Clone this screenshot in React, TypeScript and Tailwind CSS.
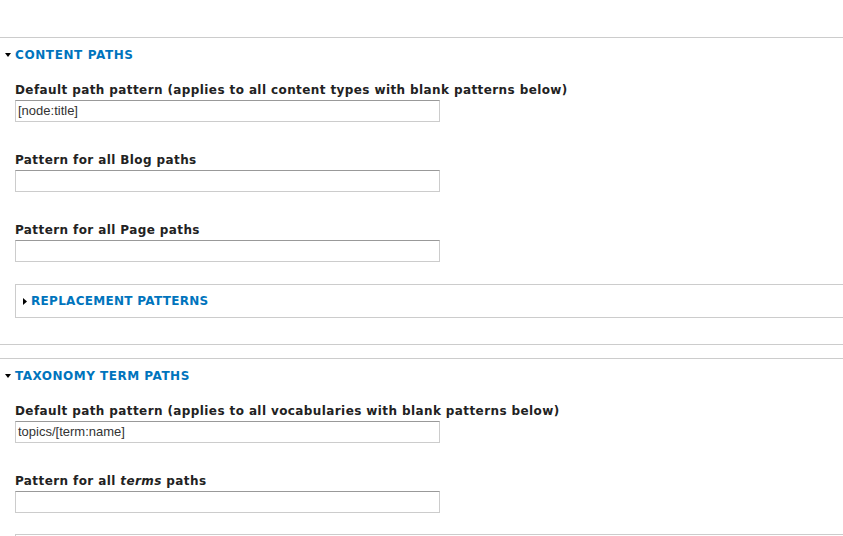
import React from "react";

const font = { fontFamily: '"DejaVu Sans", Verdana, sans-serif' };

function DownTri() {
  return (
    <svg width="6" height="4" viewBox="0 0 6 4" className="mr-[4px] shrink-0">
      <polygon points="0,0 6,0 3,4" fill="#000" />
    </svg>
  );
}
function RightTri() {
  return (
    <svg width="4" height="7" viewBox="0 0 4 7" className="mr-[4px] shrink-0">
      <polygon points="0,0 4,3.5 0,7" fill="#000" />
    </svg>
  );
}

function Field({ label, value }: { label: React.ReactNode; value?: string }) {
  return (
    <div className="pl-[15px]">
      <div className="text-[12px] font-bold text-[#222] leading-[16px] h-[16px] mb-[2px] whitespace-nowrap tracking-[0.4px]">{label}</div>
      <div className="w-[425px] h-[22px] border border-[#ccc] border-t-[#999] bg-white flex items-center pl-[2px]">
        <span className="text-[13px] text-[#333]" style={{ fontFamily: '"Liberation Sans", Arial, sans-serif' }}>
          {value}
        </span>
      </div>
    </div>
  );
}

export default function App() {
  return (
    <div className="w-[843px] h-[536px] bg-white overflow-hidden" style={font}>
      <div className="h-[37px]" />
      <div className="border-y border-[#ccc] pb-[26px]">
        <div className="flex items-center pl-[5px] h-[32px] pt-[2px]">
          <DownTri />
          <span className="text-[12px] font-bold text-[#0074bd] uppercase leading-none tracking-[0.6px]">Content paths</span>
        </div>
        <div className="flex flex-col gap-[30px] mt-[12px]">
          <Field label="Default path pattern (applies to all content types with blank patterns below)" value="[node:title]" />
          <Field label="Pattern for all Blog paths" />
          <Field label="Pattern for all Page paths" />
        </div>
        <div className="ml-[15px] mt-[22px] h-[34px] border border-r-0 border-[#ccc] flex items-center pl-[7px]">
          <RightTri />
          <span className="text-[12px] font-bold text-[#0074bd] uppercase leading-none tracking-[0.3px]">Replacement patterns</span>
        </div>
      </div>
      <div className="h-[13px]" />
      <div className="border-t border-[#ccc]">
        <div className="flex items-center pl-[5px] h-[32px] pt-[2px]">
          <DownTri />
          <span className="text-[12px] font-bold text-[#0074bd] uppercase leading-none tracking-[0.5px]">Taxonomy term paths</span>
        </div>
        <div className="flex flex-col gap-[30px] mt-[12px]">
          <Field label="Default path pattern (applies to all vocabularies with blank patterns below)" value="topics/[term:name]" />
          <Field label={<>Pattern for all <em className="font-bold italic">terms</em> paths</>} />
        </div>
        <div className="ml-[15px] mt-[21px] h-[34px] border border-r-0 border-[#ccc]" />
      </div>
    </div>
  );
}
